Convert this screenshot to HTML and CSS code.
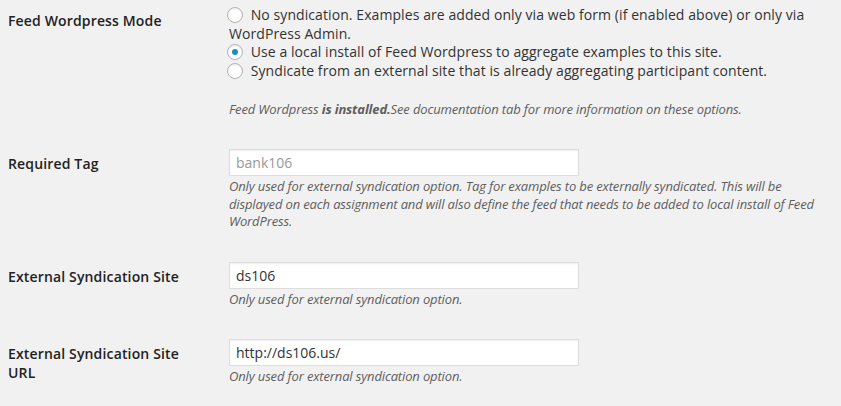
FILE: index.html
```html
<!DOCTYPE html>
<html>
<head>
<meta charset="utf-8">
<link rel="stylesheet" href="styles.css">
</head>
<body>
<div class="form-table">
  <div class="row row-first">
    <div class="th">Feed Wordpress Mode</div>
    <div class="td">
      <label class="opt"><input type="radio" name="mode" class="radio"> No syndication. Examples are added only via web form (if enabled above) or only via WordPress Admin.</label>
      <label class="opt"><input type="radio" name="mode" class="radio" checked> Use a local install of Feed Wordpress to aggregate examples to this site.</label>
      <label class="opt"><input type="radio" name="mode" class="radio"> Syndicate from an external site that is already aggregating participant content.</label>
      <p class="description first-desc">Feed Wordpress <strong>is installed.</strong>See documentation tab for more information on these options.</p>
    </div>
  </div>
  <div class="row">
    <div class="th">Required Tag</div>
    <div class="td">
      <input type="text" class="regular-text" placeholder="bank106">
      <p class="description">Only used for external syndication option. Tag for examples to be externally syndicated. This will be displayed on each assignment and will also define the feed that needs to be added to local install of Feed WordPress.</p>
    </div>
  </div>
  <div class="row">
    <div class="th">External Syndication Site</div>
    <div class="td">
      <input type="text" class="regular-text" value="ds106">
      <p class="description">Only used for external syndication option.</p>
    </div>
  </div>
  <div class="row">
    <div class="th">External Syndication Site URL</div>
    <div class="td">
      <input type="text" class="regular-text" value="http://ds106.us/">
      <p class="description">Only used for external syndication option.</p>
    </div>
  </div>
</div>
</body>
</html>
```
FILE: styles.css
```css
html, body {
  margin: 0;
  background: #f1f1f1;
}
body {
  padding: 0 10px 0 8px;
  font-family: "Open Sans", "DejaVu Sans", sans-serif;
  font-size: 14px;
  color: #333;
}
.form-table {
  display: flex;
  flex-direction: column;
}
.row {
  display: grid;
  grid-template-columns: 221px 1fr;
}
.th {
  padding: 20px 10px 0 0;
  font-weight: 600;
  color: #222;
  line-height: 19px;
  letter-spacing: 0.15px;
  width: 195px;
}
.td {
  padding: 15px 0 16px 0;
}
.row-first .th {
  padding-top: 11px;
}
.row-first .td {
  padding-top: 6px;
  padding-bottom: 16px;
}
.opt {
  display: block;
  line-height: 18.5px;
  letter-spacing: 0.08px;
}
.radio {
  -webkit-appearance: none;
  appearance: none;
  width: 16px;
  height: 16px;
  margin: 0 4px 0 -2px;
  padding: 0;
  border: 1px solid #b4b4b4;
  border-radius: 50%;
  background: #fff;
  box-shadow: inset 0 1px 2px rgba(0,0,0,.1);
  vertical-align: -3px;
  position: relative;
}
.radio:checked::before {
  content: "";
  position: absolute;
  left: 4px;
  top: 4px;
  width: 6px;
  height: 6px;
  border-radius: 50%;
  background: #1e8cbe;
}
.description {
  margin: 2px 0 0 0;
  font-size: 13px;
  font-style: italic;
  color: #5e5e5e;
  line-height: 17.5px;
  letter-spacing: -0.14px;
}
.first-desc {
  margin-top: 20px;
  line-height: 18px;
}
.description strong {
  font-weight: 700;
}
.regular-text {
  display: block;
  box-sizing: border-box;
  width: 350px;
  height: 27px;
  margin: 0;
  padding: 3px 6px;
  border: 1px solid #ddd;
  background: #fff;
  box-shadow: inset 0 1px 2px rgba(0,0,0,.07);
  font-family: "Open Sans", "DejaVu Sans", sans-serif;
  font-size: 14px;
  color: #333;
  outline: none;
}
.regular-text::placeholder {
  color: #999;
}
```
